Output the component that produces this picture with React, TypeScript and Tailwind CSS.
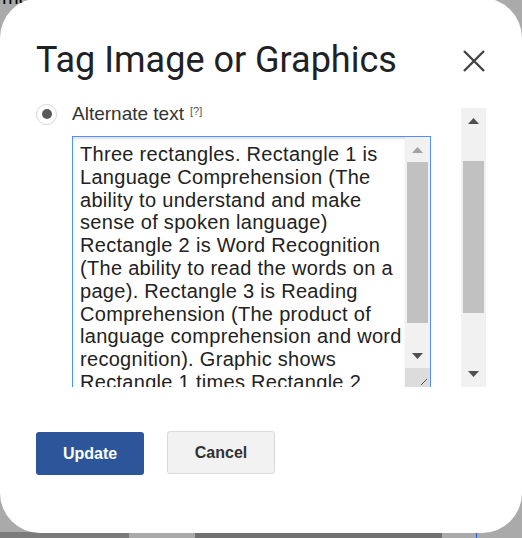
import React from 'react';

const altText =
  'Three rectangles. Rectangle 1 is Language Comprehension (The ability to understand and make sense of spoken language) Rectangle 2 is Word Recognition (The ability to read the words on a page). Rectangle 3 is Reading Comprehension (The product of language comprehension and word recognition). Graphic shows Rectangle 1 times Rectangle 2 equals Rectangle 3.';

function Arrow({ up, color }: { up?: boolean; color: string }) {
  return (
    <svg width="11" height="6" viewBox="0 0 11 6">
      <polygon points={up ? '0,6 5.5,0 11,6' : '0,0 5.5,6 11,0'} fill={color} />
    </svg>
  );
}

export default function App() {
  return (
    <div className="relative w-[522px] h-[538px] overflow-hidden bg-[#aaaaaa] font-['Liberation_Sans',Arial,sans-serif]">
      {/* page behind the dialog */}
      <div className="flex flex-col h-full">
        <div className="text-black text-[20px] leading-[20px] -mt-[13px] pl-[2px]">ma</div>
        <div className="flex-1" />
        <div className="flex h-[6px]">
          <div className="w-[129px] bg-[#7b7b7b]" />
          <div className="w-[66px] bg-[#aaaaaa]" />
          <div className="w-[247px] bg-[#717171]" />
          <div className="w-[34px] bg-[#aaaaaa]" />
          <div className="w-[1px] bg-[#2b5cc9]" />
          <div className="flex-1 bg-[#aaaaaa]" />
        </div>
      </div>

      {/* dialog */}
      <div className="absolute left-0 top-[-2px] w-[522px] h-[535px] bg-white rounded-[40px] flex flex-col">
        <div className="flex items-start justify-between pl-[36px] pr-[37px] pt-[42px] h-[106px]">
          <h2 className="font-['Roboto',sans-serif] text-[36px] leading-[40px] text-[#202124]">
            Tag Image or Graphics
          </h2>
          <button className="mt-[10px] text-[#444]">
            <svg width="22" height="22" viewBox="0 0 22 22">
              <path d="M1 1 L21 21 M21 1 L1 21" stroke="currentColor" strokeWidth="2.4" />
            </svg>
          </button>
        </div>

        <div className="flex h-[283px]">
          {/* scrolling content */}
          <div className="w-[432px] pl-[36px] overflow-hidden">
            <div className="flex items-center h-[22px] mt-[-1px]">
              <div className="w-[21px] h-[21px] rounded-full border border-[#d6d6d6] flex items-center justify-center shrink-0">
                <div className="w-[10px] h-[10px] rounded-full bg-[#595959]" />
              </div>
              <span className="ml-[15px] text-[19px] leading-[22px] text-[#333]">Alternate text</span>
              <span className="ml-[6px] self-start text-[11px] leading-[12px] text-[#555] mt-[2px]">[?]</span>
            </div>

            <div className="mt-[11px] ml-[36px] w-[359px] h-[258px] border border-[#4d90fe] flex">
              <div className="flex-1 pl-[7px] pt-[6px] pr-[2px] shadow-[inset_0_2px_2px_rgba(0,0,0,0.12)]">
                <p className="text-[20px] leading-[22.8px] tracking-[0.3px] text-[#222]">{altText}</p>
              </div>
              <div className="w-[25px] bg-[#f1f1f1] flex flex-col">
                <div className="h-[25px] flex items-center justify-center">
                  <Arrow up color="#a3a3a3" />
                </div>
                <div className="h-[161px] mx-[2px] bg-[#c1c1c1]" />
                <div className="h-[20px]" />
                <div className="h-[25px] flex items-center justify-center">
                  <Arrow color="#505050" />
                </div>
                <div className="flex-1 bg-[#dcdcdc] flex items-start justify-end pr-[2px] pt-[10px]">
                  <svg width="8" height="8" viewBox="0 0 8 8">
                    <path d="M7 1 L1 7" stroke="#555" strokeWidth="1" />
                  </svg>
                </div>
              </div>
            </div>
          </div>

          {/* outer scrollbar */}
          <div className="ml-[29px] mt-[4px] w-[25px] bg-[#f1f1f1] flex flex-col">
            <div className="h-[26px] flex items-center justify-center">
              <Arrow up color="#505050" />
            </div>
            <div className="h-[27px]" />
            <div className="h-[152px] mx-[2px] bg-[#c1c1c1]" />
            <div className="flex-1" />
            <div className="h-[26px] flex items-center justify-center">
              <Arrow color="#505050" />
            </div>
          </div>
        </div>

        <div className="flex items-center gap-[23px] pl-[36px] mt-[45px]">
          <button className="w-[108px] h-[43px] rounded-[3px] bg-[#2c5699] text-white font-bold text-[16px]">
            Update
          </button>
          <button className="w-[108px] h-[43px] -mt-[2px] rounded-[3px] bg-[#f2f2f2] border border-[#dadada] text-[#333] font-bold text-[16px]">
            Cancel
          </button>
        </div>
      </div>
    </div>
  );
}
